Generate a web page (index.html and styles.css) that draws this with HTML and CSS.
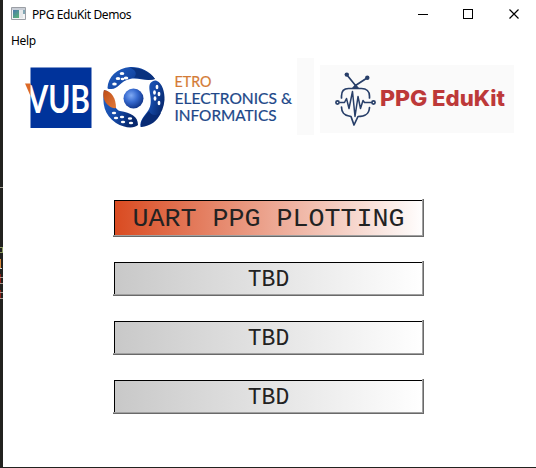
FILE: index.html
```
<!DOCTYPE html>
<html lang="en">
<head>
<meta charset="utf-8">
<title>PPG EduKit Demos</title>
<link rel="stylesheet" href="styles.css">
</head>
<body>
<div class="desktop">
  <svg class="editor-edge" viewBox="0 0 3 468" shape-rendering="crispEdges">
    <path d="M0 187.500h3" stroke="#a39d91"/>
    <path d="M0 247.500h2v5h-2" fill="none" stroke="#8d9b61"/>
    <path d="M0.500 259v9" stroke="#d9893d"/><path d="M0 268.500h2" stroke="#ccc"/>
    <path d="M.5 274v9M.5 290v8" stroke="#8c1f18"/>
    <path d="M0 277.500h3M0 283.500h3M0 292.500h3M0 298.500h3" stroke="#a99a91"/>
  </svg>
  <main class="window">
    <header class="titlebar">
      <svg class="app-icon" width="16" height="14" viewBox="0 0 16 14">
        <defs><linearGradient id="app" x2="0.600" y2="1"><stop stop-color="#4a78ad"/><stop offset="1" stop-color="#57ad7c"/></linearGradient></defs>
        <path d="M.5.5h14v12H.5z" fill="#f4f5f6" stroke="#9b9fa5"/>
        <path d="M1 1h13v2H1z" fill="#c9ced6"/>
        <path d="M2 3h6v8H2z" fill="url(#app)"/>
        <path d="M8 3h4v8H8z" fill="#e5e8ea"/><path d="M12 3h2v4h-2z" fill="#83a8b5"/>
      </svg>
      <span class="title">PPG EduKit Demos</span>
      <svg class="controls" width="136" height="28" viewBox="0 0 136 28" fill="none" stroke="#000">
        <path d="M18 14.500h10M63.500 9.500h9v9h-9z" shape-rendering="crispEdges"/>
        <path d="m109.500 9.500 9 9m0-9-9 9" stroke-width="1.200"/>
      </svg>
    </header>
    <nav class="menubar"><span>Help</span></nav>
    <section class="logos">
      <svg class="institution" width="300" height="80" viewBox="14 56 300 80">
        <defs>
          <radialGradient id="ball" cx=".38" cy=".35" r=".65"><stop stop-color="#80aaf3"/><stop offset=".5" stop-color="#386bd0"/><stop offset="1" stop-color="#12388e"/></radialGradient>
          <linearGradient id="blade" x2="1" y2=".5"><stop stop-color="#2562c4"/><stop offset=".55" stop-color="#1549a7"/><stop offset="1" stop-color="#07286d"/></linearGradient>
          <linearGradient id="ember" x2="1" y2="1"><stop stop-color="#bd4b15"/><stop offset="1" stop-color="#e27a3a"/></linearGradient>
        </defs>
        <path d="M297 58h17v77h-17z" fill="#fafafa"/>
        <path d="M30.500 67.500h61v60.500h-61z" fill="#00339b"/>
        <text class="vub" x="27.500" y="112.500" textLength="62.500" lengthAdjust="spacingAndGlyphs">VUB</text>
        <path d="M25 83.500h5.500v12.500z" fill="#dc6a28"/>
        <path d="M107.500 88C108 77 117 68 130 67c10-.5 20 4 25 12-9 3-17-2-25 0-10 2-12 11-20 10-2 0-2.500-.5-2.500-1z" fill="url(#blade)"/>
        <path d="M130 67.500c9 0 18 3.500 25 11.500-8 2-14-2-21-1 4-5 1-8-4-10.500z" fill="#0a327f"/>
        <path d="M157 81c5 2 8 11 7.500 19-1 14-10 24-24 27-1-7 4-11 8-17 6-9-2-22 2-27 2-2 4-3 6.500-2z" fill="url(#blade)"/>
        <path d="M141 127c-1-7 4-11 8-16 2 5 7 5 12 2-4 8-10 13-20 14z" fill="#082b75"/>
        <path d="M104 90c-2 13 0 25 12 33 8 5 18 6 22 2 0-9-7-12-18-14-8-2-6-20-16-21z" fill="url(#blade)"/>
        <path d="M104 90c8 1 12 9 12 18-4 1-10-3-12-9-1-3-1-6 0-9z" fill="url(#ember)"/>
        <circle cx="133.500" cy="98.500" r="10" fill="url(#ball)"/>
        <g fill="#fff">
          <ellipse cx="122" cy="73.500" rx="2.300" ry="1.500"/><ellipse cx="126" cy="78" rx="2.300" ry="1.500"/><ellipse cx="118" cy="78.500" rx="2.300" ry="1.500"/><ellipse cx="122.500" cy="79" rx="1.800" ry="1.300"/><ellipse cx="114.500" cy="84" rx="2.300" ry="1.500"/>
          <ellipse cx="157" cy="87" rx="1.400" ry="2.300"/><ellipse cx="154.500" cy="92.500" rx="1.400" ry="2.300"/><ellipse cx="159" cy="94" rx="1.400" ry="2.300"/><ellipse cx="155" cy="98.500" rx="1.400" ry="2.300"/><ellipse cx="159" cy="103" rx="1.400" ry="2.300"/>
          <ellipse cx="114" cy="113" rx="2.200" ry="1.300"/><ellipse cx="116" cy="118" rx="2.200" ry="1.300"/><ellipse cx="122" cy="117" rx="2.200" ry="1.300"/><ellipse cx="123" cy="122" rx="2.200" ry="1.300"/><ellipse cx="130" cy="118.500" rx="2.200" ry="1.300"/><ellipse cx="131" cy="123" rx="2.200" ry="1.300"/>
        </g>
        <text class="dept etro" x="174.500" y="87" textLength="37" lengthAdjust="spacingAndGlyphs">ETRO</text>
        <text class="dept" x="174.500" y="103.500" textLength="117.500" lengthAdjust="spacingAndGlyphs">ELECTRONICS &amp;</text>
        <text class="dept" x="174.500" y="120.500" textLength="102" lengthAdjust="spacingAndGlyphs">INFORMATICS</text>
      </svg>
      <svg class="edukit" width="194" height="68" viewBox="320 65 194 68">
        <path d="M320 65h194v68H320z" fill="#fafafa"/>
        <g fill="none" stroke="#283f69" stroke-width="1.700" stroke-linecap="round" stroke-linejoin="round">
          <path d="m347 75 8.500 10.500L367 78M341.500 98v-2c0-5 3-7.500 7-7.500h13c5 0 8 3 8 7.500v2M341.500 107c0 5 3 8.500 7.500 9l2 .5 3 8.500 4-8.500c7 0 11-2 11.500-9"/>
          <path d="M340 102.500h4.500l2-4 2.500 10 3.500-17 2.500 25 3-20 2.500 12 2.500-8 1.500 2h7" stroke-width="1.500"/>
          <circle cx="337.500" cy="102.500" r="1.600"/><circle cx="373.500" cy="102.500" r="1.600"/>
        </g>
        <g fill="#283f69"><circle cx="346.800" cy="74.600" r="2.200"/><circle cx="367.300" cy="77.800" r="2.200"/><path d="m352 88 3.500-4 3.500 4z"/></g>
        <text class="brand" x="380" y="105.500" textLength="47.500" lengthAdjust="spacingAndGlyphs">PPG</text>
        <text class="brand" x="432" y="105.500" textLength="73" lengthAdjust="spacingAndGlyphs">EduKit</text>
      </svg>
    </section>
    <section class="demos">
      <button class="demo primary">UART PPG PLOTTING</button>
      <button class="demo">TBD</button>
      <button class="demo">TBD</button>
      <button class="demo">TBD</button>
    </section>
  </main>
</div>
</body>
</html>
```
FILE: styles.css
```
* { box-sizing: border-box; }
body { margin: 0; background: #22221f; overflow: hidden; }
.desktop { display: grid; grid-template-columns: 3px 1fr; width: 536px; height: 468px; }
.editor-edge { width: 3px; height: 468px; }
.window {
  height: 467px;
  background: #fff;
  color: #000;
  font-family: "Noto Sans", sans-serif;
  font-size: 12px;
}
.titlebar { display: flex; align-items: center; height: 28px; padding-left: 8px; }
.app-icon { margin-right: 5px; }
.title { white-space: nowrap; letter-spacing: -0.400px; line-height: 16px; padding-top: 1px; }
.controls { margin-left: auto; }
.menubar { height: 28px; padding: 5px 8px 0; line-height: 16px; }
.menubar span { letter-spacing: -0.300px; }
.logos { display: flex; align-items: flex-start; gap: 6px; height: 143px; padding-left: 11px; }
.logos svg { flex: none; display: block; }
.edukit { margin-top: 9px; }
.vub { font: 700 38px Lato, sans-serif; fill: #fff; }
.dept { font: 400 15px Lato, sans-serif; fill: #204788; stroke: #204788; stroke-width: 0.200px; }
.etro { fill: #d47b35; stroke: #d47b35; }
.brand { font: 800 22px Inter, sans-serif; fill: #bd3939; }
.demos { display: flex; flex-direction: column; gap: 24px; padding-left: 110px; }
.demo {
  --from: #c8c8c8;
  width: 311px;
  height: 35px;
  padding: 4px 2px 1px;
  border: 0;
  color: #222;
  font: 23px/30px "Liberation Mono", monospace;
  background:
    linear-gradient(#696969, #696969) right bottom / 100% 1px no-repeat,
    linear-gradient(#696969, #696969) right top / 1px 100% no-repeat,
    linear-gradient(#a0a0a0, #a0a0a0) left bottom 1px / 310px 1px no-repeat,
    linear-gradient(#a0a0a0, #a0a0a0) right 1px top / 1px 100% no-repeat,
    linear-gradient(#fff, #fff) left top / 100% 1px no-repeat,
    linear-gradient(#fff, #fff) left top / 1px 100% no-repeat,
    linear-gradient(#000, #000) left 1px top 1px / 308px 1px no-repeat,
    linear-gradient(#000, #000) left 1px top 1px / 1px 100% no-repeat,
    linear-gradient(90deg, var(--from), #fff);
}
.primary {
  --from: #d94a20;
  height: 38px;
  font-size: 26.670px;
  line-height: 33px;
}
```
